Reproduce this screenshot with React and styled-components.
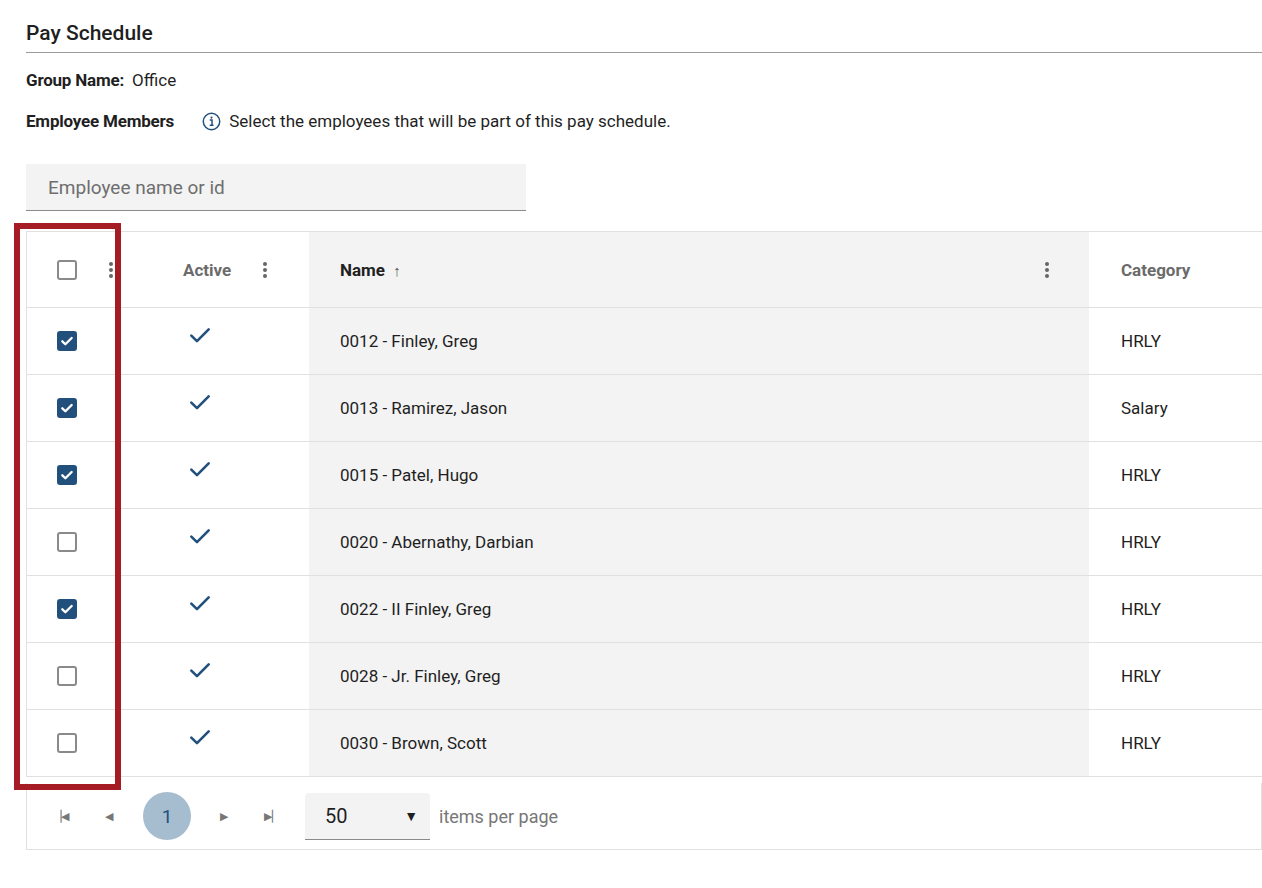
import React from "react";
import styled, { createGlobalStyle } from "styled-components";

const Global = createGlobalStyle`
  *, *::before, *::after { box-sizing: border-box; }
  body { margin: 0; font-family: Roboto, "Liberation Sans", sans-serif; color: #1f1f1f; background: #fff; }
`;
const Page = styled.div`padding: 21px 0 0 26px; width: 1262px;`;
const Title = styled.h2`margin: 0; font-size: 21px; font-weight: 500; padding-bottom: 7px; border-bottom: 1px solid #9a9a9a;`;
const Line = styled.div`display: flex; align-items: center; font-size: 17px; margin-top: ${p => p.$mt}px;`;
const Label = styled.span`font-weight: 700; margin-right: ${p => p.$mr}px; letter-spacing: -0.2px;`;
const Search = styled.div`margin-top: 33px; width: 500px; height: 47px; background: #f3f3f3; border-bottom: 1px solid #8a8a8a; display: flex; align-items: center; padding-left: 22px; font-size: 19px; color: #6e6e6e;`;
const Table = styled.div`margin-top: 20px; border-top: 1px solid #e0e0e0; border-left: 1px solid #e0e0e0;`;
const Row = styled.div`display: grid; grid-template-columns: 128px 154px 780px 1fr; height: ${p => p.$h}px; border-bottom: 1px solid #e0e0e0; font-size: 17px;`;
const Cell = styled.div`display: flex; align-items: center; padding-left: ${p => p.$pl || 0}px; padding-right: ${p => p.$pr || 0}px; background: ${p => p.$gray ? "#f3f3f3" : "transparent"}; font-weight: ${p => p.$head ? 700 : 400}; color: ${p => p.$muted ? "#6b6b6b" : "#1f1f1f"}; justify-content: ${p => p.$between ? "space-between" : "flex-start"};`;
const Box = styled.span`width: 20px; height: 20px; border-radius: 3px; border: 2px solid ${p => p.$on ? "#22507d" : "#8a8a8a"}; background: ${p => p.$on ? "#22507d" : "#fff"}; display: inline-flex; align-items: center; justify-content: center;`;
const Kebab = styled.span`display: inline-flex; flex-direction: column; gap: 2px; margin-left: ${p => p.$ml || 0}px; span{width:4px;height:4px;border-radius:50%;background:#666;}`;
const Pager = styled.div`height: 67px; border: 1px solid #e0e0e0; border-top: none; margin-top: 6px; display: flex; align-items: center; padding-left: 10px;`;
const Nav = styled.span`width: 48px; display: inline-flex; justify-content: center; color: #777; font-size: 11px;`;
const PageBtn = styled.span`width: 48px; height: 48px; border-radius: 50%; background: #a6bccf; color: #22507d; display: inline-flex; align-items: center; justify-content: center; font-size: 19px; margin: 0 9px 0 10px;`;
const Select = styled.div`margin-left: 9px; width: 125px; height: 47px; background: #f3f3f3; border-bottom: 1px solid #8a8a8a; border-radius: 4px 4px 0 0; display: flex; align-items: center; justify-content: space-between; padding: 0 12px 0 20px; font-size: 20px;`;
const Hint = styled.span`margin-left: 9px; color: #777; font-size: 18px;`;
const Highlight = styled.div`position: absolute; left: 14px; top: 223px; width: 107px; height: 567px; border: 6px solid #a51c24;`;

const Check = ({ c = "#fff", s = 14, w = 2 }) => (
  <svg width={s} height={s} viewBox="0 0 12 12"><path d="M2 6.3l2.6 2.5L10 3.4" fill="none" stroke={c} strokeWidth={w} strokeLinecap="round" strokeLinejoin="round" /></svg>
);
const Dots = (p) => <Kebab {...p}><span /><span /><span /></Kebab>;

const rows = [
  ["0012 - Finley, Greg", "HRLY", true], ["0013 - Ramirez, Jason", "Salary", true], ["0015 - Patel, Hugo", "HRLY", true],
  ["0020 - Abernathy, Darbian", "HRLY", false], ["0022 - II Finley, Greg", "HRLY", true], ["0028 - Jr. Finley, Greg", "HRLY", false],
  ["0030 - Brown, Scott", "HRLY", false],
];

export default function App() {
  return (
    <Page>
      <Global />
      <Title>Pay Schedule</Title>
      <Line $mt={17}><Label $mr={8}>Group Name:</Label>Office</Line>
      <Line $mt={21}><Label $mr={28}>Employee Members</Label>
        <svg width="19" height="19" viewBox="0 0 18 18" style={{ marginRight: 8 }}><circle cx="9" cy="9" r="7.8" fill="none" stroke="#22507d" strokeWidth="1.4" /><circle cx="9" cy="5.3" r="1" fill="#22507d" /><path d="M7.3 7.6h2.2v5M7.3 12.6h3.6" fill="none" stroke="#22507d" strokeWidth="1.4" /></svg>
        Select the employees that will be part of this pay schedule.</Line>
      <Search>Employee name or id</Search>
      <Table>
        <Row $h={76}>
          <Cell $pl={30}><Box /><Dots $ml={32} /></Cell>
          <Cell $pl={28} $head $muted>Active<Dots $ml={32} /></Cell>
          <Cell $pl={31} $pr={40} $gray $head $between><span>Name <span style={{ fontWeight: 400, color: "#555", fontSize: 15, marginLeft: 4 }}>↑</span></span><Dots /></Cell>
          <Cell $pl={32} $head $muted>Category</Cell>
        </Row>
        {rows.map(([n, c, on]) => (
          <Row $h={67} key={n}>
            <Cell $pl={30}><Box $on={on}>{on && <Check />}</Box></Cell>
            <Cell $pl={32} style={{ paddingBottom: 12 }}><Check c="#22507d" s={26} w={1.2} /></Cell>
            <Cell $pl={31} $gray>{n}</Cell>
            <Cell $pl={32}>{c}</Cell>
          </Row>
        ))}
      </Table>
      <Pager>
        <Nav>▕◀</Nav><Nav>◀</Nav><PageBtn>1</PageBtn><Nav>▶</Nav><Nav>▶▏</Nav>
        <Select>50<span style={{ fontSize: 14 }}>▼</span></Select>
        <Hint>items per page</Hint>
      </Pager>
      <Highlight />
    </Page>
  );
}
